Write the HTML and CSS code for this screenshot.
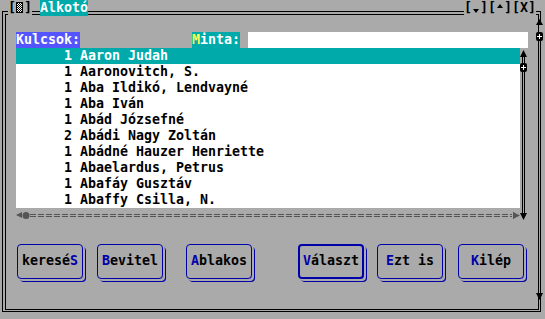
FILE: index.html
```html
<!DOCTYPE html>
<html lang="hu">
<head>
    <meta charset="UTF-8">
    <title>Alkotó</title>
    <link rel="stylesheet" href="styles.css">
</head>
<body>
<div class="win">
    <div class="frame">
        <div class="search">
            <span class="lbl-keys">Kulcsok:</span>
            <span class="lbl-minta"><span class="hot-y">M</span>inta:</span>
            <span class="input"></span>
        </div>
        <div class="listbox">
            <div class="listcol">
                <ul class="list">
                    <li class="sel"><span class="cnt">1</span><span class="name">Aaron Judah</span></li>
                    <li><span class="cnt">1</span><span class="name">Aaronovitch, S.</span></li>
                    <li><span class="cnt">1</span><span class="name">Aba Ildikó, Lendvayné</span></li>
                    <li><span class="cnt">1</span><span class="name">Aba Iván</span></li>
                    <li><span class="cnt">1</span><span class="name">Abád Józsefné</span></li>
                    <li><span class="cnt">2</span><span class="name">Abádi Nagy Zoltán</span></li>
                    <li><span class="cnt">1</span><span class="name">Abádné Hauzer Henriette</span></li>
                    <li><span class="cnt">1</span><span class="name">Abaelardus, Petrus</span></li>
                    <li><span class="cnt">1</span><span class="name">Abafáy Gusztáv</span></li>
                    <li><span class="cnt">1</span><span class="name">Abaffy Csilla, N.</span></li>
                </ul>
                <svg class="hscroll" width="504" height="16" viewBox="0 0 504 16">
                    <g fill="#555">
                        <path d="M0 7L6 4V10z"/>
                        <circle cx="10" cy="7.5" r="3.5"/>
                        <path d="M497 4H498V11H497z"/>
                        <path d="M498 4.5L504 7.5L498 10.5z"/>
                    </g>
                    <g stroke="#555" stroke-width="1" stroke-dasharray="6 2">
                        <line x1="14" y1="6.5" x2="496" y2="6.5"/>
                        <line x1="14" y1="8.5" x2="496" y2="8.5"/>
                    </g>
                </svg>
            </div>
            <svg class="vscroll" width="8" height="176" viewBox="0 0 8 176">
                <rect x="2" y="8" width="1" height="160"/>
                <rect x="4" y="8" width="1" height="160"/>
                <path d="M3.5 2L7 9H0z"/>
                <rect x="0" y="15" width="7" height="9" rx="2"/>
                <rect x="3" y="17" width="1" height="5" fill="#fff"/>
                <rect x="1" y="19" width="5" height="1" fill="#fff"/>
                <path d="M0 165H7L3.5 172z"/>
            </svg>
        </div>
        <div class="buttons">
            <div class="btn">keresé<span class="hot">S</span></div>
            <div class="btn"><span class="hot">B</span>evitel</div>
            <div class="btn"><span class="hot">A</span>blakos</div>
            <div class="btn default"><span class="hot">V</span>álaszt</div>
            <div class="btn"><span class="hot">E</span>zt is</div>
            <div class="btn"><span class="hot">K</span>ilép</div>
        </div>
    </div>

    <div class="title">
        <span class="tb">[<svg width="8" height="16" viewBox="0 0 8 16">
            <defs>
                <pattern id="ck" width="2" height="2" patternUnits="userSpaceOnUse">
                    <rect width="2" height="2" fill="#fff"/>
                    <rect width="1" height="1"/>
                    <rect x="1" y="1" width="1" height="1"/>
                </pattern>
            </defs>
            <rect x="0.5" y="2.5" width="6" height="10" fill="url(#ck)" stroke="#000"/>
        </svg>]</span>
        <span class="tname">Alkotó</span>
        <span class="tfill"></span>
        <span class="tb">[<svg width="8" height="16" viewBox="0 0 8 16"><path d="M1 9H7L4 13z"/></svg>][<svg width="8" height="16" viewBox="0 0 8 16"><path d="M1 8H7L4 4z"/></svg>][X]</span>
    </div>

    <svg class="fscroll" width="8" height="288" viewBox="0 0 8 288">
        <rect x="2" y="9" width="3" height="7" fill="#aaa"/>
        <rect x="2" y="9" width="1" height="7"/>
        <path d="M3.5 3L7 9H0z"/>
        <rect x="0" y="16" width="7" height="9" rx="2"/>
        <rect x="3" y="18" width="1" height="5" fill="#fff"/>
        <rect x="1" y="20" width="5" height="1" fill="#fff"/>
        <path d="M0 277H7L3.5 284z"/>
    </svg>
</div>
</body>
</html>
```

FILE: styles.css
```css
* {
    margin: 0;
    padding: 0;
    box-sizing: border-box;
}
body {
    background: #aaa;
    font-family: "DejaVu Sans Mono", monospace;
    font-size: 13.3px;
    font-weight: bold;
    line-height: 16px;
    color: #000;
}
.win {
    position: relative;
    width: 545px;
    height: 319px;
    overflow: hidden;
    background: #aaa;
}
.frame {
    margin: 11px 4px 0 2px;
    height: 301px;
    border-style: double;
    border-color: #000;
    border-width: 4px 3px 3px 4px;
    padding: 17px 0 0 10px;
}

/* search row */
.search {
    display: flex;
    height: 16px;
}
.lbl-keys {
    width: 64px;
    background: #5555ff;
    color: #fff;
}
.lbl-minta {
    margin-left: 112px;
    width: 48px;
    background: #00aaaa;
    color: #fff;
}
.hot-y {
    color: #ffff55;
}
.input {
    margin-left: 8px;
    width: 280px;
    background: #fff;
}

/* list */
.listbox {
    display: flex;
}
.listcol {
    width: 504px;
}
.list {
    list-style: none;
    background: #fff;
    height: 160px;
}
.list li {
    display: flex;
    height: 16px;
    white-space: pre;
}
.list .sel {
    background: #00aaaa;
    color: #fff;
}
.cnt {
    width: 56px;
    text-align: right;
}
.name {
    margin-left: 8px;
}
.hscroll, .vscroll {
    display: block;
}

/* buttons */
.buttons {
    display: flex;
    margin-top: 20px;
}
.btn {
    width: 66px;
    height: 35px;
    border: 1px solid #0000aa;
    border-radius: 4px;
    box-shadow: 2px 2px 0 #aaa, 3px 3px 0 #0000aa;
    text-align: center;
    line-height: 32px;
    white-space: pre;
}
.btn:nth-child(1) { margin-left: 1px; }
.btn:nth-child(2) { margin-left: 14px; }
.btn:nth-child(3) { margin-left: 23px; }
.btn:nth-child(4) { margin-left: 46px; }
.btn:nth-child(5) { margin-left: 13px; }
.btn:nth-child(6) { margin-left: 15px; }
.btn.default {
    border-width: 2px;
    line-height: 30px;
}
.hot {
    color: #0000aa;
}

/* title bar over the frame */
.title {
    position: absolute;
    top: 0;
    left: 8px;
    right: 9px;
    height: 16px;
    display: flex;
}
.tb {
    display: flex;
    background: #aaa;
}
.tb svg {
    display: block;
}
.tname {
    margin-left: 8px;
    background: #00aaaa;
    color: #fff;
}
.tfill {
    flex: 1;
}
.fscroll {
    position: absolute;
    left: 536px;
    top: 16px;
    display: block;
}
```
